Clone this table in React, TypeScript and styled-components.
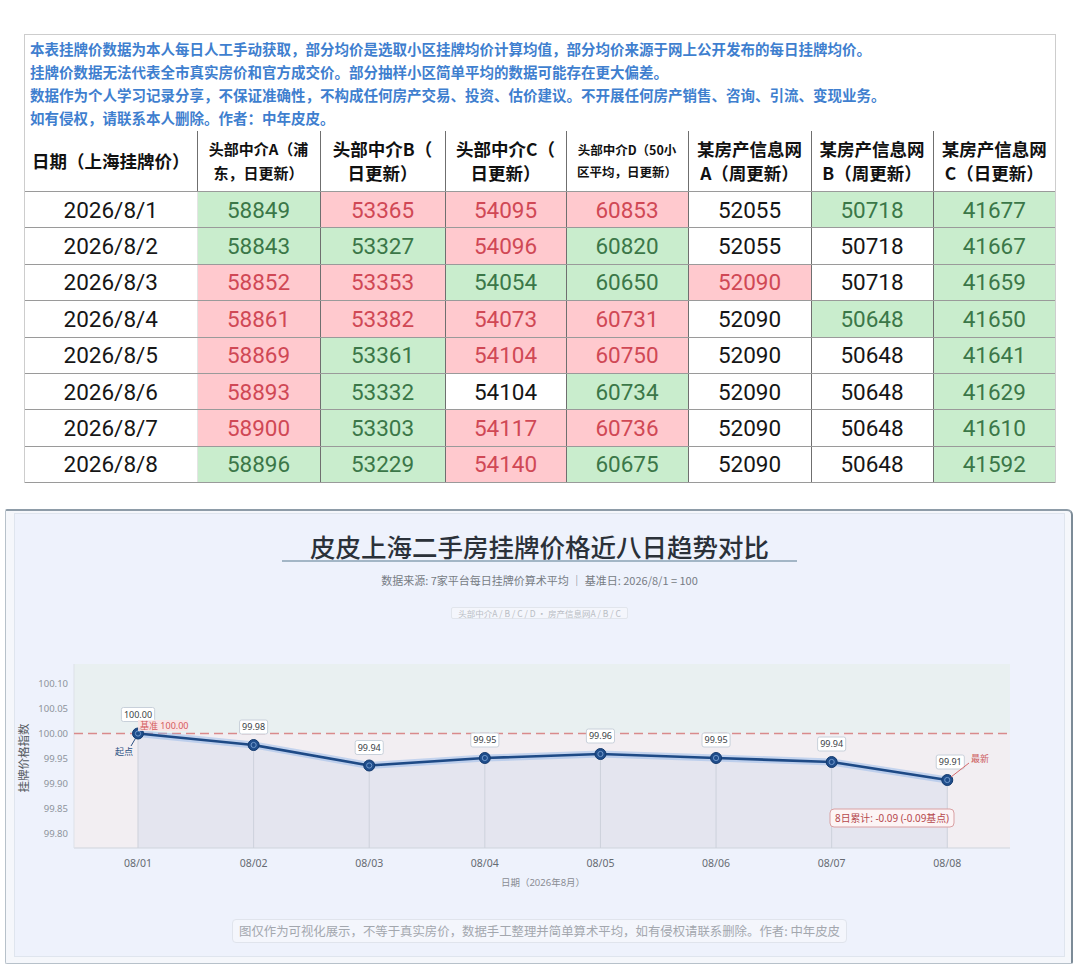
import React from "react";
import styled, { createGlobalStyle } from "styled-components";

const GlobalStyle = createGlobalStyle`
  html, body {
    margin: 0;
    padding: 0;
    background: #ffffff;
  }
  body {
    font-family: "Noto Sans CJK SC", "Noto Sans", sans-serif;
  }
`;

type Tone = "up" | "down" | "flat";

const NOTES = [
  "本表挂牌价数据为本人每日人工手动获取，部分均价是选取小区挂牌均价计算均值，部分均价来源于网上公开发布的每日挂牌均价。",
  "挂牌价数据无法代表全市真实房价和官方成交价。部分抽样小区简单平均的数据可能存在更大偏差。",
  "数据作为个人学习记录分享，不保证准确性，不构成任何房产交易、投资、估价建议。不开展任何房产销售、咨询、引流、变现业务。",
  "如有侵权，请联系本人删除。作者：中年皮皮。",
];

const COLUMNS = [
  { width: 172, size: 17.5, lines: ["日期（上海挂牌价）"] },
  { width: 123, size: 15, lines: ["头部中介A（浦", "东，日更新）"] },
  { width: 125, size: 17.5, lines: ["头部中介B（", "日更新）"] },
  { width: 121, size: 17.5, lines: ["头部中介C（", "日更新）"] },
  { width: 122, size: 12.5, lines: ["头部中介D（50小", "区平均，日更新）"] },
  { width: 123, size: 17.5, lines: ["某房产信息网", "A（周更新）"] },
  { width: 122, size: 17.5, lines: ["某房产信息网", "B（周更新）"] },
  { width: 122, size: 17.5, lines: ["某房产信息网", "C（日更新）"] },
];

const u = "up" as Tone;
const d = "down" as Tone;
const f = "flat" as Tone;

const ROWS: { date: string; cells: [number, Tone][] }[] = [
  { date: "2026/8/1", cells: [[58849, d], [53365, u], [54095, u], [60853, u], [52055, f], [50718, d], [41677, d]] },
  { date: "2026/8/2", cells: [[58843, d], [53327, d], [54096, u], [60820, d], [52055, f], [50718, f], [41667, d]] },
  { date: "2026/8/3", cells: [[58852, u], [53353, u], [54054, d], [60650, d], [52090, u], [50718, f], [41659, d]] },
  { date: "2026/8/4", cells: [[58861, u], [53382, u], [54073, u], [60731, u], [52090, f], [50648, d], [41650, d]] },
  { date: "2026/8/5", cells: [[58869, u], [53361, d], [54104, u], [60750, u], [52090, f], [50648, f], [41641, d]] },
  { date: "2026/8/6", cells: [[58893, u], [53332, d], [54104, f], [60734, d], [52090, f], [50648, f], [41629, d]] },
  { date: "2026/8/7", cells: [[58900, u], [53303, d], [54117, u], [60736, u], [52090, f], [50648, f], [41610, d]] },
  { date: "2026/8/8", cells: [[58896, d], [53229, d], [54140, u], [60675, d], [52090, f], [50648, f], [41592, d]] },
];

const TONES: Record<Tone, { bg: string; fg: string }> = {
  up: { bg: "#ffc9ce", fg: "#d04855" },
  down: { bg: "#c9edcd", fg: "#3b7748" },
  flat: { bg: "#ffffff", fg: "#161616" },
};

const Page = styled.div`
  width: 1080px;
  padding-top: 34px;
  box-sizing: border-box;
`;

const SheetBox = styled.div`
  margin-left: 24px;
  width: 1032px;
  box-sizing: border-box;
  border: 1px solid #cdcdcd;
  border-bottom: none;
`;

const Notes = styled.div`
  padding: 2px 5px;
  font-size: 14.5px;
  font-weight: 700;
  line-height: 23px;
  color: #3f7fcf;
  white-space: nowrap;
`;

const Sheet = styled.table`
  width: 100%;
  border-collapse: collapse;
  table-layout: fixed;
`;

const HeadCell = styled.th<{ $size: number; $first?: boolean }>`
  height: 60px;
  padding: 0 2px;
  font-size: ${(p) => p.$size}px;
  line-height: ${(p) => (p.$size < 14 ? 22 : 24)}px;
  font-weight: 700;
  color: #111;
  text-align: center;
  vertical-align: middle;
  white-space: nowrap;
  border-left: ${(p) => (p.$first ? "none" : "1px solid #6f6f6f")};
  border-bottom: 1px solid #9a9a9a;
`;

const HeadLine = styled.span`
  display: block;
`;

const DataRow = styled.tr`
  height: 36.4px;
`;

const DateCell = styled.td`
  padding: 0;
  font-family: Roboto, "Noto Sans", sans-serif;
  font-size: 22.5px;
  color: #161616;
  text-align: center;
  border-bottom: 1px solid #9a9a9a;
  border-right: 1px solid #e4e4e4;
`;

const DataCell = styled.td<{ $tone: Tone }>`
  padding: 0;
  font-family: Roboto, "Noto Sans", sans-serif;
  font-size: 22.5px;
  text-align: center;
  background: ${(p) => TONES[p.$tone].bg};
  color: ${(p) => TONES[p.$tone].fg};
  border-left: 1px solid #6f6f6f;
  border-bottom: 1px solid #9a9a9a;
`;

const ChartCard = styled.div`
  margin: 26px 0 0 5px;
  width: 1068px;
  box-sizing: border-box;
  border: 1px solid #b7c1ca;
  border-top: 2px solid #8e9ca8;
  border-right: 2px solid #7c8b97;
  border-radius: 2px 6px 2px 2px;
  background: #f5f7fb;
  padding: 2px 6px 6px 8px;
`;

const ChartPanel = styled.div`
  background: #eef2fc;
  border: 1px solid #dfe5ee;
  display: flex;
  flex-direction: column;
  align-items: center;
  padding: 18px 0 13px;
`;

const Title = styled.h1`
  margin: 0;
  padding: 0 28px;
  font-size: 25.5px;
  font-weight: 500;
  line-height: 28px;
  color: #2b3139;
  border-bottom: 2px solid #a3b6c6;
`;

const Subtitle = styled.div`
  margin-top: 10px;
  font-size: 11px;
  line-height: 16px;
  color: #777c84;
`;

const Legend = styled.div`
  margin-top: 19px;
  padding: 0 6px;
  font-size: 8.5px;
  line-height: 10px;
  color: #b9bdc4;
  background: #f4f6fc;
  border: 1px solid #e1e5ec;
  border-radius: 2px;
`;

const ChartSvg = styled.svg`
  display: block;
  margin-top: 12px;
`;

const Footnote = styled.div`
  margin-top: 26px;
  padding: 0 6px;
  font-size: 12.4px;
  line-height: 22px;
  color: #a3a7ae;
  background: #f4f6fc;
  border: 1px solid #e0e4ec;
  border-radius: 4px;
`;

const AxisText = styled.text<{ $size: number; $color: string }>`
  font-family: "Noto Sans", "Noto Sans CJK SC", sans-serif;
  font-size: ${(p) => p.$size}px;
  fill: ${(p) => p.$color};
`;

const DAYS = ["08/01", "08/02", "08/03", "08/04", "08/05", "08/06", "08/07", "08/08"];
const VALUES = [100, 99.977, 99.936, 99.951, 99.959, 99.951, 99.943, 99.907];
const TICKS = [100.1, 100.05, 100, 99.95, 99.9, 99.85, 99.8];
const XS = DAYS.map((_, i) => 138 + i * 115.61);
const yOf = (v: number) => 732.5 - (v - 100) * 500;

const PLOT = { left: 74, right: 1010, top: 663, bottom: 847 };

const TrendChart = () => {
  const pts = VALUES.map((v, i) => [XS[i], yOf(v)] as const);
  const line = pts.map(([x, y]) => `${x},${y}`).join(" ");
  const area = `${XS[0]},${PLOT.bottom} ${line} ${XS[7]},${PLOT.bottom}`;

  return (
    <ChartSvg width={1049} height={262} viewBox="15 630 1049 262">
      {/* plot bands */}
      <rect x={PLOT.left} y={PLOT.top} width={PLOT.right - PLOT.left} height={732.5 - PLOT.top} fill="#e9f0f1" />
      <rect x={PLOT.left} y={732.5} width={PLOT.right - PLOT.left} height={PLOT.bottom - 732.5} fill="#f2eef2" />
      <polygon points={area} fill="#e4e5ef" />
      <line x1={PLOT.left} y1={PLOT.bottom} x2={PLOT.right} y2={PLOT.bottom} stroke="#cfd4dc" />
      <line x1={PLOT.left} y1={PLOT.top} x2={PLOT.left} y2={PLOT.bottom} stroke="#dde1e8" />

      {pts.map(([x, y], i) => (
        <line key={i} x1={x} y1={y} x2={x} y2={PLOT.bottom} stroke="#cdd1db" />
      ))}

      <line x1={PLOT.left} y1={732.5} x2={PLOT.right} y2={732.5} stroke="#d98a8c" strokeWidth={1.3} strokeDasharray="9 5" />

      {TICKS.map((t) => (
        <AxisText key={t} $size={9.5} $color="#8d929b" x={68} y={yOf(t) + 3.3} textAnchor="end">
          {t.toFixed(2)}
        </AxisText>
      ))}
      <AxisText $size={11.5} $color="#555a61" x={23} y={757} textAnchor="middle" dominantBaseline="central" transform="rotate(-90 23 757)">
        挂牌价格指数
      </AxisText>

      {DAYS.map((day, i) => (
        <AxisText key={day} $size={10.5} $color="#666b72" x={XS[i]} y={866} textAnchor="middle">
          {day}
        </AxisText>
      ))}
      <AxisText $size={9.5} $color="#8a8d94" x={543} y={885} textAnchor="middle">
        日期（2026年8月）
      </AxisText>

      {/* line with glow */}
      <polyline points={line} fill="none" stroke="#93b8ea" strokeOpacity={0.5} strokeWidth={7} strokeLinejoin="round" />
      <polyline points={line} fill="none" stroke="#1e4a86" strokeWidth={2.6} strokeLinejoin="round" />

      {pts.map(([x, y], i) => (
        <g key={i}>
          <circle cx={x} cy={y} r={5.5} fill="#1f4d8b" stroke="#143a6e" />
          <circle cx={x} cy={y} r={2.6} fill="none" stroke="#7098cb" />
        </g>
      ))}

      {/* value tags */}
      {pts.map(([x, y], i) => {
        const label = VALUES[i].toFixed(2);
        const w = (label.length - 1) * 5.15 + 7.5;
        const cx = i === 7 ? x + 3 : x;
        const top = i === 0 ? y - 26 : y - 25;
        return (
          <g key={label + i}>
            <rect x={cx - w / 2} y={top} width={w} height={14} rx={2} fill="#ffffff" stroke="#c8d0da" />
            <AxisText $size={9} $color="#3a3f46" x={cx} y={top + 10.2} textAnchor="middle">
              {label}
            </AxisText>
          </g>
        );
      })}

      <rect x={138} y={719} width={50} height={11} fill="#fbe3e4" opacity={0.9} />
      <AxisText $size={9} $color="#d35b5d" x={140} y={728}>
        基准 100.00
      </AxisText>

      <line x1={131} y1={745} x2={136} y2={736.5} stroke="#2d5283" />
      <AxisText $size={9} $color="#2d5283" x={115} y={753.5}>
        起点
      </AxisText>

      <line x1={951} y1={776} x2={969} y2={762} stroke="#d46a6c" />
      <AxisText $size={9} $color="#cc5a5c" x={971} y={761}>
        最新
      </AxisText>

      <rect x={830} y={808} width={124} height={18} rx={4} fill="#fcf4f5" stroke="#d9a0a3" />
      <AxisText $size={10} $color="#b5484c" x={892} y={821} textAnchor="middle" textLength={114} lengthAdjust="spacingAndGlyphs">
        8日累计: -0.09 (-0.09基点)
      </AxisText>
    </ChartSvg>
  );
};

const App = () => {
  return (
    <Page>
      <GlobalStyle />
      <SheetBox>
        <Notes>
          {NOTES.map((n) => (
            <div key={n}>{n}</div>
          ))}
        </Notes>
        <Sheet>
          <colgroup>
            {COLUMNS.map((c, i) => (
              <col key={i} style={{ width: c.width }} />
            ))}
          </colgroup>
          <thead>
            <tr>
              {COLUMNS.map((c, i) => (
                <HeadCell key={i} $size={c.size} $first={i === 0}>
                  {c.lines.map((l) => (
                    <HeadLine key={l}>{l}</HeadLine>
                  ))}
                </HeadCell>
              ))}
            </tr>
          </thead>
          <tbody>
            {ROWS.map((row) => (
              <DataRow key={row.date}>
                <DateCell>{row.date}</DateCell>
                {row.cells.map(([value, tone], i) => (
                  <DataCell key={i} $tone={tone}>
                    {value}
                  </DataCell>
                ))}
              </DataRow>
            ))}
          </tbody>
        </Sheet>
      </SheetBox>

      <ChartCard>
        <ChartPanel>
          <Title>皮皮上海二手房挂牌价格近八日趋势对比</Title>
          <Subtitle>数据来源: 7家平台每日挂牌价算术平均 ｜ 基准日: 2026/8/1 = 100</Subtitle>
          <Legend>头部中介A / B / C / D · 房产信息网A / B / C</Legend>
          <TrendChart />
          <Footnote>
            图仅作为可视化展示，不等于真实房价，数据手工整理并简单算术平均，如有侵权请联系删除。作者: 中年皮皮
          </Footnote>
        </ChartPanel>
      </ChartCard>
    </Page>
  );
};

export default App;
